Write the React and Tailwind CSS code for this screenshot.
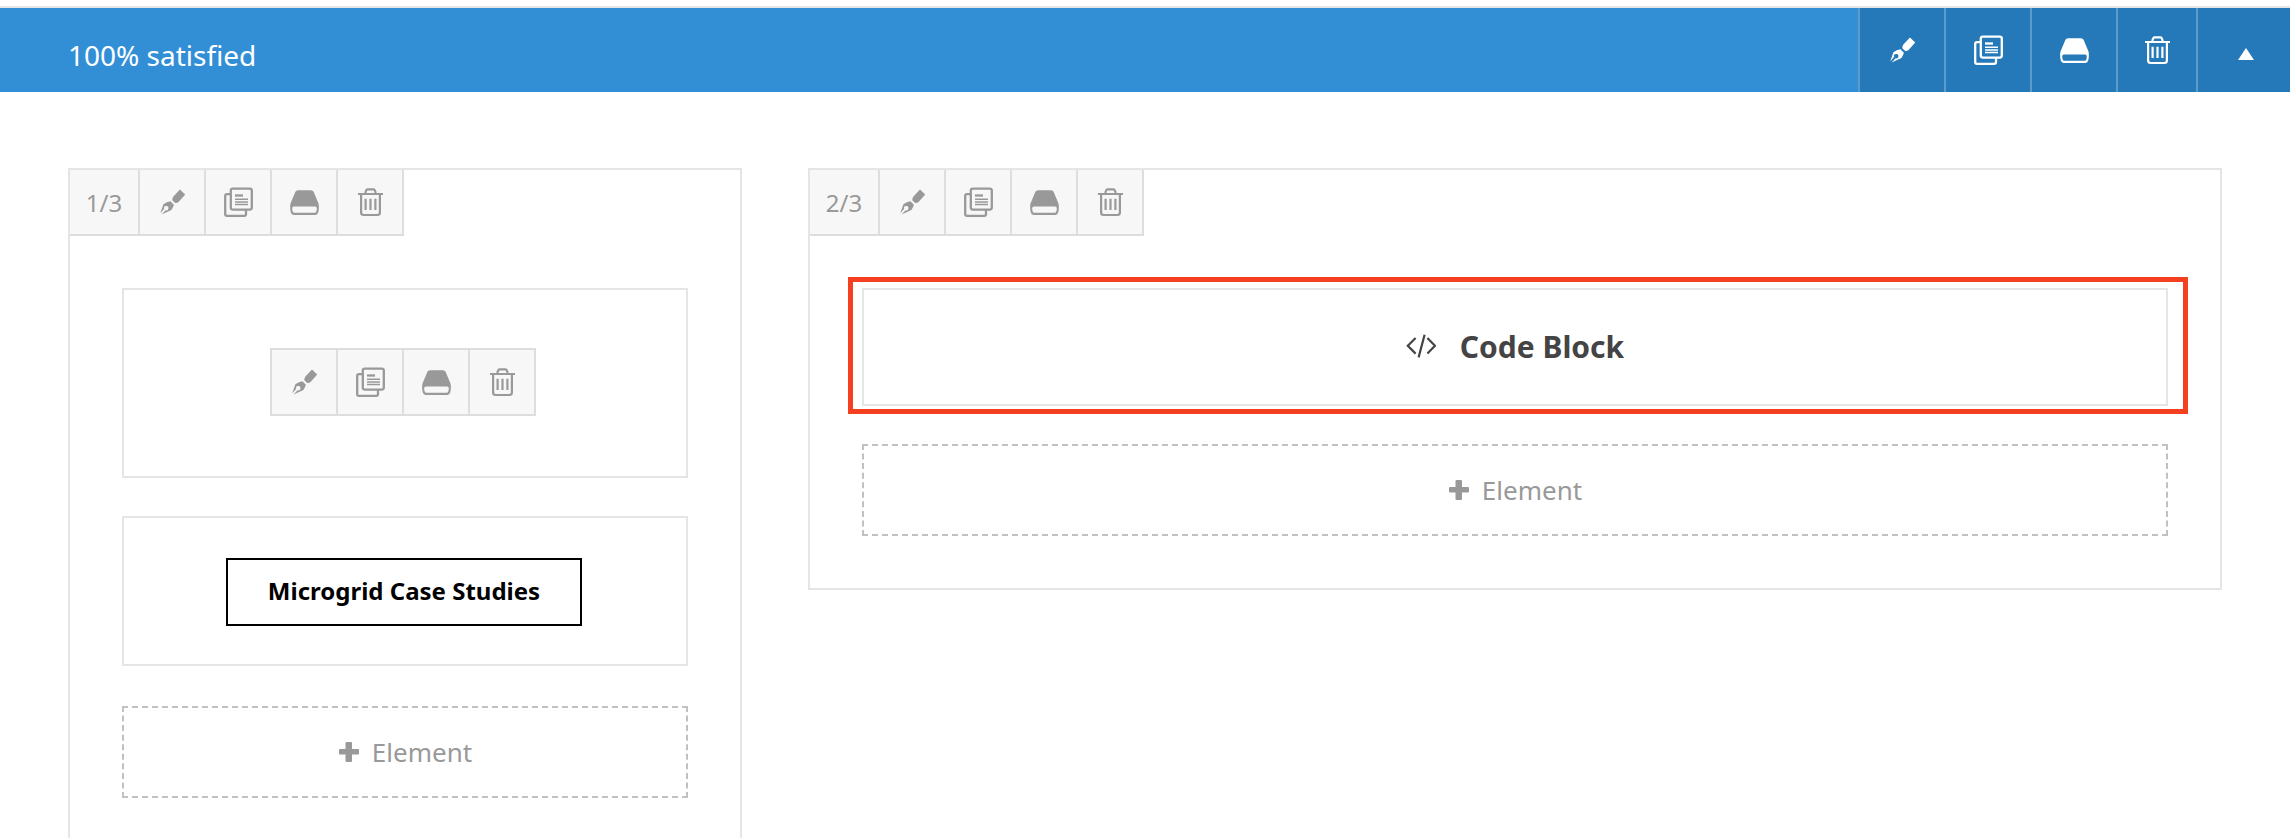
import React from "react";

function PenIcon() {
  return (
    <svg width="30" height="30" viewBox="0 0 30 30" fill="currentColor" aria-hidden="true">
      <path d="M23 2.5 L28.2 7.5 L21.8 14.8 Q19.2 16.8 17.6 15.5 L15.6 13.5 Q14.8 12 16.4 9.6 Z" />
      <path
        fillRule="evenodd"
        d="M13.4 14.2 L16.9 17.8 Q16.3 20.4 14.4 23 L4.6 27.5 L8.6 23.2 A2.2 2.2 0 1 0 7.2 21.8 L3.2 26.4 L6.4 17.2 Q9.8 14.9 13.4 14.2 Z"
      />
    </svg>
  );
}

function CopyIcon() {
  return (
    <svg width="30" height="30" viewBox="0 0 30 30" fill="none" stroke="currentColor" strokeWidth="2.3" aria-hidden="true">
      <rect x="7.8" y="1.6" width="21" height="21" rx="2" />
      <path d="M7.5 7.2 H4 Q2.2 7.2 2.2 9 V27 Q2.2 28.8 4 28.8 H21.2 Q23 28.8 23 27 V23" />
      <path d="M12 8.5 H20" />
      <path d="M12 12.2 H25 M12 14.9 H25 M12 17.6 H25" strokeWidth="1.5" />
    </svg>
  );
}

function DriveIcon() {
  return (
    <svg width="30" height="30" viewBox="0 0 30 30" fill="currentColor" aria-hidden="true">
      <path
        fillRule="evenodd"
        d="M9 3.2 H22 Q23.8 3.2 24.6 4.8 L29.5 16.6 Q30.4 20.5 29.2 25.6 Q28.6 28 26.4 28 H4.6 Q2.4 28 1.8 25.6 Q.6 20.5 1.5 16.6 L6.4 4.8 Q7.2 3.2 9 3.2 Z M5 19.5 Q3.2 19.5 3.2 21 Q3.2 25.8 5.2 25.8 H25.8 Q27.8 25.8 27.8 21 Q27.8 19.5 26 19.5 Z"
      />
    </svg>
  );
}

function TrashIcon() {
  return (
    <svg width="30" height="30" viewBox="0 0 30 30" fill="none" stroke="currentColor" strokeWidth="2.2" aria-hidden="true">
      <path d="M3 7 H28 M10.3 7 Q10.6 2.3 12.8 2.3 H18.2 Q20.4 2.3 20.7 7" />
      <path d="M6.1 7 V25.5 Q6.1 28 8.6 28 H22.4 Q24.9 28 24.9 25.5 V7" />
      <path d="M10.6 11.8 V23 M15.5 11.8 V23 M20.4 11.8 V23" />
    </svg>
  );
}

const actions = [
  { label: "Edit", Icon: PenIcon },
  { label: "Duplicate", Icon: CopyIcon },
  { label: "Save", Icon: DriveIcon },
  { label: "Delete", Icon: TrashIcon },
];

function ActionButtons() {
  return actions.map(({ label, Icon }) => (
    <button
      key={label}
      type="button"
      aria-label={label}
      className="flex h-16 w-[66px] items-center justify-center border-r-2 border-[#dddddd]"
    >
      <Icon />
    </button>
  ));
}

function Column({ size, children }) {
  return (
    <section className="border-2 border-[#e5e5e5]">
      <div className="flex w-fit border-b-2 border-[#dddddd] bg-[#f7f7f7] text-[#999999]">
        <span className="flex w-[70px] items-center justify-center border-r-2 border-[#dddddd] pt-0.5 text-2xl">{size}</span>
        <ActionButtons />
      </div>
      <div className="p-[52px]">{children}</div>
    </section>
  );
}

function AddElement() {
  return (
    <button
      type="button"
      className="flex h-[92px] w-full items-center justify-center gap-3 border-2 border-dashed border-[#c1c1c1] text-[26px] text-[#999999]"
    >
      <svg width="22" height="22" viewBox="0 0 22 22" fill="currentColor" aria-hidden="true">
        <path d="M8.5 1 H13 Q14 1 14 2 V8 H20 Q21 8 21 9 V12.5 Q21 13.5 20 13.5 H14 V20 Q14 21 13 21 H8.5 Q7.5 21 7.5 20 V13.5 H2 Q1 13.5 1 12.5 V9 Q1 8 2 8 H7.5 V2 Q7.5 1 8.5 1 Z" />
      </svg>
      Element
    </button>
  );
}

const headerWidths = ["w-[86px]", "w-[86px]", "w-[86px]", "w-20"];

export default function App() {
  return (
    <div className="h-screen overflow-hidden bg-white pt-1.5 font-['Noto_Sans',sans-serif]">
      <header className="flex h-[86px] justify-between border-t-2 border-[#e5e5e5] bg-[#328fd6] text-white">
        <h1 className="flex items-center pt-2.5 pl-[68px] text-[28px]">100% satisfied</h1>
        <div className="flex bg-[#2679b8]">
          {actions.map(({ label, Icon }, i) => (
            <button
              key={label}
              type="button"
              aria-label={label + " section"}
              className={"flex items-center justify-center border-l-2 border-[#5c9cca] " + headerWidths[i]}
            >
              <Icon />
            </button>
          ))}
          <button
            type="button"
            aria-label="Collapse section"
            className="flex w-[94px] items-center justify-center border-l-2 border-[#5c9cca] pt-2 pl-1"
          >
            <svg width="16" height="12" viewBox="0 0 16 12" fill="currentColor" aria-hidden="true">
              <path d="M8 0 L16 12 H0 Z" />
            </svg>
          </button>
        </div>
      </header>

      <main className="grid grid-cols-[674fr_1414fr] items-start gap-[66px] px-[68px] pt-[76px]">
        <Column size="1/3">
          <div className="mb-[38px] flex h-[190px] justify-center border-2 border-[#e5e5e5] pt-[58px] pr-1">
            <div className="flex h-[68px] border-y-2 border-l-2 border-[#dddddd] bg-[#f7f7f7] text-[#999999]">
              <ActionButtons />
            </div>
          </div>
          <div className="mb-10 flex h-[150px] justify-center border-2 border-[#e5e5e5] pt-10 pr-0.5">
            <a
              href="#case-studies"
              className="flex h-[68px] items-center border-2 border-black px-10 pb-0.5 text-2xl font-bold text-black"
            >
              Microgrid Case Studies
            </a>
          </div>
          <AddElement />
        </Column>

        <Column size="2/3">
          <div className="relative mb-[38px] flex h-[118px] items-center justify-center gap-6 border-2 border-[#e5e5e5] pb-0.5 text-[#444444]">
            <svg
              width="30"
              height="24"
              viewBox="0 0 30 24"
              fill="none"
              stroke="currentColor"
              strokeWidth="2.2"
              aria-hidden="true"
            >
              <path d="M9.6 4 L1.8 11.8 L9.6 19.6 M21.4 4 L29 11.8 L21.4 19.6 M18.6 .8 L12.6 23.4" />
            </svg>
            <h2 className="text-[30px] font-bold">Code Block</h2>
            <div className="pointer-events-none absolute -top-[13px] -right-[22px] -bottom-[10px] -left-4 border-5 border-[#f44020]" />
          </div>
          <AddElement />
        </Column>
      </main>
    </div>
  );
}
